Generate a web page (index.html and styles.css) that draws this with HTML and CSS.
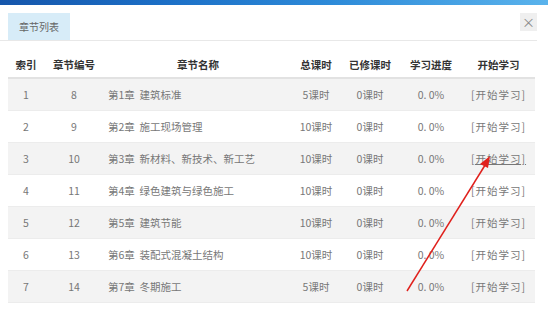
FILE: index.html
```html
<!DOCTYPE html>
<html>
<head>
<meta charset="utf-8">
<link rel="stylesheet" href="styles.css">
</head>
<body>
<div class="topbar"></div>
<div class="dialog">
	<div class="tabs">
		<div class="tab">章节列表</div>
		<div class="close">&#215;</div>
	</div>
	<table class="chapters">
		<colgroup>
			<col class="c-idx"><col class="c-no"><col class="c-name"><col class="c-total"><col class="c-done"><col class="c-prog"><col class="c-go">
		</colgroup>
		<thead>
			<tr><th>索引</th><th>章节编号</th><th>章节名称</th><th>总课时</th><th>已修课时</th><th>学习进度</th><th>开始学习</th></tr>
		</thead>
		<tbody>
			<tr><td>1</td><td>8</td><td class="name">第1章&nbsp; 建筑标准</td><td>5课时</td><td>0课时</td><td>0. 0%</td><td><a href="#">[开始学习]</a></td></tr>
			<tr><td>2</td><td>9</td><td class="name">第2章&nbsp; 施工现场管理</td><td>10课时</td><td>0课时</td><td>0. 0%</td><td><a href="#">[开始学习]</a></td></tr>
			<tr><td>3</td><td>10</td><td class="name">第3章&nbsp; 新材料、新技术、新工艺</td><td>10课时</td><td>0课时</td><td>0. 0%</td><td><a href="#" class="hover">[开始学习]</a></td></tr>
			<tr><td>4</td><td>11</td><td class="name">第4章&nbsp; 绿色建筑与绿色施工</td><td>10课时</td><td>0课时</td><td>0. 0%</td><td><a href="#">[开始学习]</a></td></tr>
			<tr><td>5</td><td>12</td><td class="name">第5章&nbsp; 建筑节能</td><td>10课时</td><td>0课时</td><td>0. 0%</td><td><a href="#">[开始学习]</a></td></tr>
			<tr><td>6</td><td>13</td><td class="name">第6章&nbsp; 装配式混凝土结构</td><td>10课时</td><td>0课时</td><td>0. 0%</td><td><a href="#">[开始学习]</a></td></tr>
			<tr><td>7</td><td>14</td><td class="name">第7章&nbsp; 冬期施工</td><td>5课时</td><td>0课时</td><td>0. 0%</td><td><a href="#">[开始学习]</a></td></tr>
		</tbody>
	</table>
</div>
<!-- annotation arrow pointing at row 3 -->
<svg class="arrow" width="554" height="315" viewBox="0 0 554 315">
	<line x1="407" y1="291" x2="487" y2="162" stroke="#e0201c" stroke-width="1.5"/>
	<polygon points="490,156 480,164 488,168" fill="#e0201c"/>
</svg>
</body>
</html>
```

FILE: styles.css
```css
body {
	margin: 0;
	background: #fff;
	font-family: "Noto Sans CJK SC", sans-serif;
	font-size: 10.5px;
	color: #777;
}
.topbar {
	height: 5px;
	margin-right: 6px;
	background: linear-gradient(to right, #1656ab, #1c6fc6 30%, #2d8ad8 60%, #5ab3ec);
}
.dialog {
	padding: 8px 8px 0 0;
}
.tabs {
	display: flex;
	justify-content: space-between;
	align-items: flex-start;
	border-bottom: 1px solid #e8e8e8;
	margin-right: 9px;
	padding-left: 8px;
}
.tab {
	width: 62px;
	height: 27px;
	line-height: 27px;
	text-align: center;
	font-size: 10px;
	background: #d7ecf8;
	color: #666;
}
.close {
	width: 17px;
	height: 18px;
	line-height: 17px;
	text-align: center;
	background: #efefef;
	color: #888;
	font-size: 13px;
}
.chapters {
	margin-left: 8px;
	width: 527px;
	table-layout: fixed;
	border-collapse: collapse;
}
.c-idx { width: 36px; }
.c-no { width: 60px; }
.c-name { width: 188px; }
.c-total { width: 48px; }
.c-done { width: 60px; }
.c-prog { width: 62px; }
.c-go { width: 73px; }
.chapters th {
	height: 26px;
	padding: 10px 0 0;
	color: #333;
	font-weight: bold;
	text-align: center;
	border-bottom: 2px solid #e2e2e2;
}
.chapters td {
	height: 31px;
	padding: 0;
	text-align: center;
	white-space: nowrap;
	border-bottom: 1px solid #ececec;
}
.chapters tbody tr:nth-child(odd) {
	background: #f3f3f3;
}
.chapters td.name {
	text-align: left;
	padding-left: 4px;
}
.chapters a {
	color: #777;
	text-decoration: none;
	letter-spacing: 1px;
}
.chapters a.hover {
	text-decoration: underline;
}
.arrow {
	position: absolute;
	left: 0;
	top: 0;
	pointer-events: none;
}
```
